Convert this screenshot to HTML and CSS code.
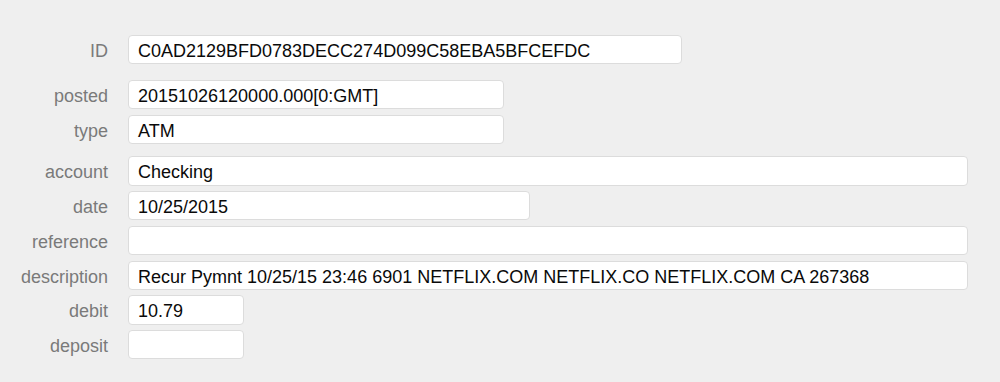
FILE: index.html
```html
<!DOCTYPE html>
<html>
<head>
<meta charset="utf-8">
<link rel="stylesheet" href="styles.css">
</head>
<body>
<div class="form">
  <div class="row gap-after-lg">
    <div class="label">ID</div>
    <div class="field w-id">C0AD2129BFD0783DECC274D099C58EBA5BFCEFDC</div>
  </div>
  <div class="row">
    <div class="label">posted</div>
    <div class="field w-posted">20151026120000.000[0:GMT]</div>
  </div>
  <div class="row gap-after-md">
    <div class="label">type</div>
    <div class="field w-posted">ATM</div>
  </div>
  <div class="row">
    <div class="label">account</div>
    <div class="field w-full">Checking</div>
  </div>
  <div class="row">
    <div class="label">date</div>
    <div class="field w-date">10/25/2015</div>
  </div>
  <div class="row">
    <div class="label">reference</div>
    <div class="field w-full"></div>
  </div>
  <div class="row">
    <div class="label">description</div>
    <div class="field w-full">Recur Pymnt 10/25/15 23:46 6901 NETFLIX.COM NETFLIX.CO NETFLIX.COM CA 267368</div>
  </div>
  <div class="row">
    <div class="label">debit</div>
    <div class="field w-small">10.79</div>
  </div>
  <div class="row">
    <div class="label">deposit</div>
    <div class="field w-small"></div>
  </div>
</div>
</body>
</html>
```

FILE: styles.css
```css
html, body {
  margin: 0;
  padding: 0;
  background: #efefef;
  height: 100%;
}
body {
  font-family: "Liberation Sans", Arial, sans-serif;
  font-size: 18px;
}
.form {
  padding-top: 35px;
  display: flex;
  flex-direction: column;
  gap: 5.6px;
}
.row {
  display: flex;
  align-items: stretch;
  gap: 20px;
  height: 29.2px;
}
.gap-after-lg { margin-bottom: 10.5px; }
.gap-after-md { margin-bottom: 6.5px; }
.label {
  box-sizing: border-box;
  width: 108px;
  flex: none;
  padding-top: 4px;
  line-height: 24px;
  text-align: right;
  color: #7a7a7a;
}
.field {
  box-sizing: border-box;
  height: 29.2px;
  padding: 3px 9px 0;
  line-height: 24px;
  background: #ffffff;
  border: 1px solid #dcdcdc;
  border-radius: 4px;
  color: #0a0a0a;
  white-space: nowrap;
  overflow: hidden;
}
.w-id { width: 554px; }
.w-posted { width: 376px; }
.w-date { width: 402px; }
.w-full { width: 840px; }
.w-small { width: 116px; }
```
